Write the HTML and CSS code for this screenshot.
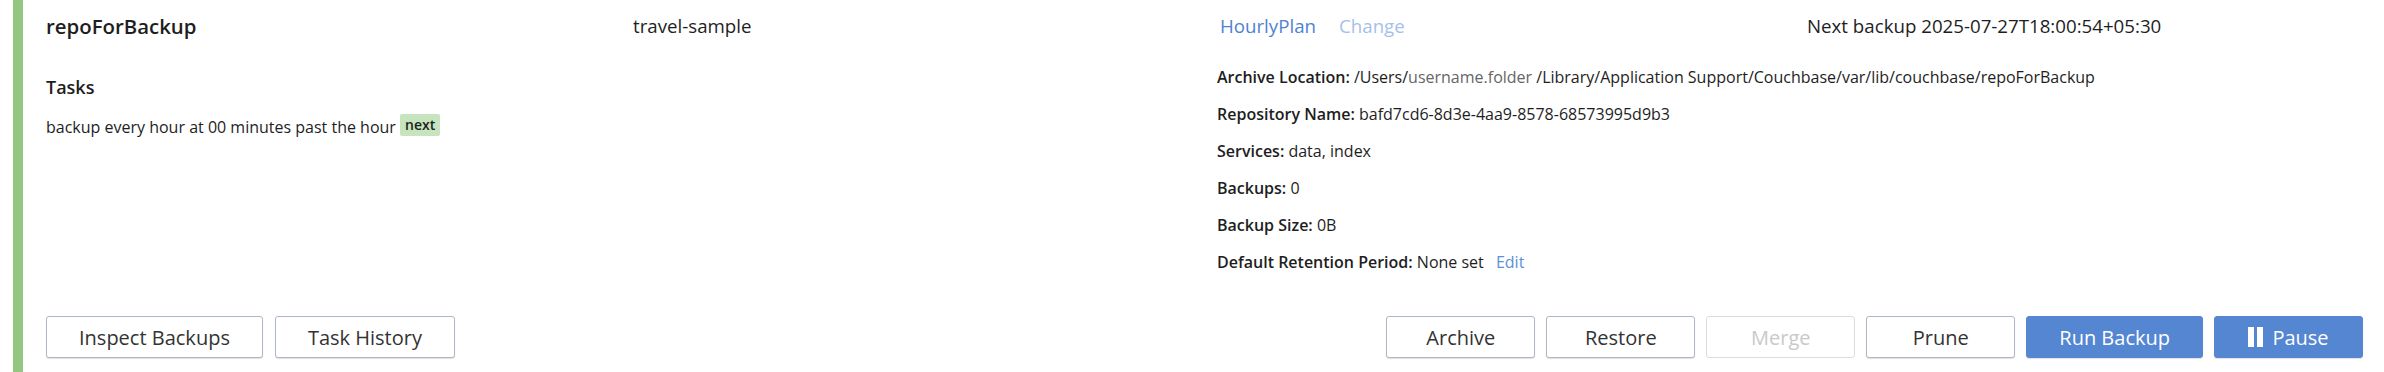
FILE: index.html
```html
<!DOCTYPE html>
<html lang="en">
<head>
  <meta charset="UTF-8">
  <title>Backup repository</title>
  <link rel="stylesheet" href="styles.css">
</head>
<body>
  <div class="repo-card">
    <div class="repo-head">
      <div class="repo-name">repoForBackup</div>
      <div class="repo-bucket">travel-sample</div>
      <div class="repo-plan">
        <a class="link" href="#">HourlyPlan</a>
        <a class="link link-faded" href="#">Change</a>
      </div>
      <div class="repo-next">Next backup 2025-07-27T18:00:54+05:30</div>
    </div>

    <div class="repo-body">
      <div class="tasks">
        <h4>Tasks</h4>
        <div class="task-line">backup every hour at 00 minutes past the hour <span class="badge">next</span></div>
      </div>
      <div class="details">
        <div class="detail"><b>Archive Location:</b> /Users/<span class="muted">username.folder</span> /Library/Application Support/Couchbase/var/lib/couchbase/repoForBackup</div>
        <div class="detail"><b>Repository Name:</b> bafd7cd6-8d3e-4aa9-8578-68573995d9b3</div>
        <div class="detail"><b>Services:</b> data, index</div>
        <div class="detail"><b>Backups:</b> 0</div>
        <div class="detail"><b>Backup Size:</b> 0B</div>
        <div class="detail"><b>Default Retention Period:</b> None set <a class="link edit" href="#">Edit</a></div>
      </div>
    </div>

    <div class="repo-actions">
      <div class="btn-group">
        <button class="btn">Inspect Backups</button>
        <button class="btn">Task History</button>
      </div>
      <div class="btn-group">
        <button class="btn">Archive</button>
        <button class="btn">Restore</button>
        <button class="btn" disabled>Merge</button>
        <button class="btn">Prune</button>
        <button class="btn btn-primary">Run Backup</button>
        <button class="btn btn-primary"><span class="pause-icon"></span>Pause</button>
      </div>
    </div>
  </div>
</body>
</html>
```

FILE: styles.css
```css
html, body {
  overflow: hidden;
}
body {
  margin: 0;
  font-family: "Open Sans", sans-serif;
  color: #1e1e1e;
  background: #fff;
}
.repo-card {
  margin-left: 13px;
  border-left: 10px solid #93c67f;
  padding: 0 24px 14px 23px;
  height: 358px;
}
.repo-head,
.repo-body {
  display: grid;
  grid-template-columns: repeat(4, minmax(0, 1fr));
  column-gap: 34px;
}
.repo-head {
  padding-top: 13px;
  height: 44px;
  font-size: 18.7px;
  line-height: 26px;
}
.repo-name {
  font-size: 20.4px;
  font-weight: 600;
}
.repo-plan {
  display: flex;
  gap: 23px;
}
.link {
  color: #4f83d1;
  text-decoration: none;
}
.link-faded {
  color: #a7c0ea;
}
.repo-body {
  font-size: 16px;
}
.tasks {
  grid-column: 1 / 3;
}
.tasks h4 {
  margin: 18px 0 0;
  font-size: 18px;
  font-weight: 600;
  line-height: 24px;
}
.task-line {
  margin-top: 15px;
  line-height: 24px;
}
.badge {
  display: inline-block;
  vertical-align: 3px;
  background: #c6e4be;
  font-size: 14px;
  font-weight: 600;
  line-height: 22px;
  padding: 0 5px;
  border-radius: 2px;
}
.details {
  grid-column: 3 / 5;
  padding-top: 2px;
  margin-left: -3px;
}
.detail {
  line-height: 37px;
  white-space: nowrap;
}
.detail b {
  font-weight: 600;
}
.muted {
  color: #666;
}
.edit {
  margin-left: 8px;
  color: #5b8fdc;
}
.repo-actions {
  display: flex;
  justify-content: space-between;
  margin-top: 35px;
  margin-right: -3px;
}
.btn-group {
  display: flex;
  gap: 12px;
}
.btn-group + .btn-group {
  gap: 11px;
}
.btn {
  box-sizing: border-box;
  height: 42px;
  min-width: 149px;
  padding: 0 32px;
  font-family: "Open Sans", sans-serif;
  font-size: 20px;
  color: #333;
  background: #fff;
  border: 1px solid #aeb7c4;
  border-radius: 3px;
  box-shadow: 0 1px 1px rgba(0, 0, 0, 0.12);
  display: flex;
  align-items: center;
  justify-content: center;
  cursor: pointer;
}
.btn:disabled {
  color: #c9c9c9;
  border-color: #dcdcdc;
  box-shadow: none;
  cursor: default;
}
.btn-primary {
  background: #5486d2;
  border-color: #5486d2;
  color: #fff;
}
.pause-icon {
  box-sizing: content-box;
  width: 3px;
  height: 20px;
  margin-right: 9px;
  border-left: 6px solid #fff;
  border-right: 6px solid #fff;
}
```
